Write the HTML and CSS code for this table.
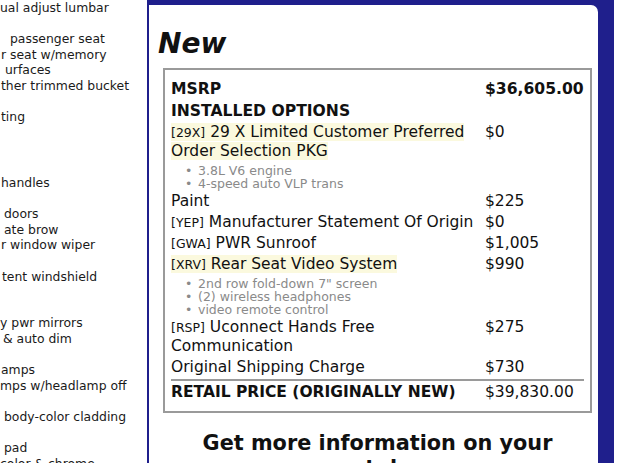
FILE: index.html
```html
<!DOCTYPE html>
<html>
<head>
<meta charset="utf-8">
<link rel="stylesheet" href="styles.css">
</head>
<body>
<div class="page">
  <div class="left">
    <div class="ln">ual adjust lumbar</div>
    <div class="ln gap"></div>
    <div class="ln x10">passenger seat</div>
    <div class="ln x1">r seat w/memory</div>
    <div class="ln x5">urfaces</div>
    <div class="ln x1">ther trimmed bucket</div>
    <div class="ln gap"></div>
    <div class="ln x1">ting</div>
    <div class="ln gap tall"></div>
    <div class="ln gap"></div>
    <div class="ln gap"></div>
    <div class="ln x1">handles</div>
    <div class="ln gap"></div>
    <div class="ln x4">doors</div>
    <div class="ln x4">ate brow</div>
    <div class="ln x1">r window wiper</div>
    <div class="ln gap"></div>
    <div class="ln x2">tent windshield</div>
    <div class="ln gap"></div>
    <div class="ln gap"></div>
    <div class="ln">y pwr mirrors</div>
    <div class="ln x3">&amp; auto dim</div>
    <div class="ln gap"></div>
    <div class="ln x1">amps</div>
    <div class="ln">mps w/headlamp off</div>
    <div class="ln gap"></div>
    <div class="ln x4">body-color cladding</div>
    <div class="ln gap"></div>
    <div class="ln x4">pad</div>
    <div class="ln">color &amp; chrome</div>
  </div>
  <div class="frame">
    <div class="panel">
      <h1 class="title">New</h1>
      <div class="box">
        <div class="row head">
          <div class="desc">MSRP</div>
          <div class="price">$36,605.00</div>
        </div>
        <div class="row head">
          <div class="desc">INSTALLED OPTIONS</div>
          <div class="price"></div>
        </div>
        <div class="row">
          <div class="desc"><span class="hl"><span class="code">[29X]</span> 29 X Limited Customer Preferred Order Selection PKG</span>
            <ul class="feats">
              <li>3.8L V6 engine</li>
              <li>4-speed auto VLP trans</li>
            </ul>
          </div>
          <div class="price">$0</div>
        </div>
        <div class="row">
          <div class="desc">Paint</div>
          <div class="price">$225</div>
        </div>
        <div class="row">
          <div class="desc"><span class="code">[YEP]</span> Manufacturer Statement Of Origin</div>
          <div class="price">$0</div>
        </div>
        <div class="row">
          <div class="desc"><span class="code">[GWA]</span> PWR Sunroof</div>
          <div class="price">$1,005</div>
        </div>
        <div class="row">
          <div class="desc"><span class="hl"><span class="code">[XRV]</span> Rear Seat Video System</span>
            <ul class="feats">
              <li>2nd row fold-down 7" screen</li>
              <li>(2) wireless headphones</li>
              <li>video remote control</li>
            </ul>
          </div>
          <div class="price">$990</div>
        </div>
        <div class="row">
          <div class="desc"><span class="code">[RSP]</span> Uconnect Hands Free Communication</div>
          <div class="price">$275</div>
        </div>
        <div class="row">
          <div class="desc">Original Shipping Charge</div>
          <div class="price">$730</div>
        </div>
        <div class="row total">
          <div class="desc">RETAIL PRICE (ORIGINALLY NEW)</div>
          <div class="price">$39,830.00</div>
        </div>
      </div>
      <h2 class="more">Get more information on your smartphone</h2>
    </div>
  </div>
  <div class="right"></div>
</div>
</body>
</html>
```

FILE: styles.css
```css
html, body {
  margin: 0;
  padding: 0;
  background: #ffffff;
}
body {
  width: 640px;
  height: 463px;
  overflow: hidden;
  font-family: "DejaVu Sans", Verdana, sans-serif;
  color: #111;
}
.page {
  display: flex;
  height: 463px;
}
.left {
  width: 147px;
  flex: none;
  overflow: hidden;
  font-size: 12.4px;
  line-height: 15.6px;
  color: #1a1a1a;
  white-space: nowrap;
}
.ln { height: 15.6px; }
.ln.tall { height: 19px; }
.x1 { padding-left: 1px; }
.x2 { padding-left: 2px; }
.x3 { padding-left: 3px; }
.x4 { padding-left: 4px; }
.x5 { padding-left: 5px; }
.x10 { padding-left: 10px; }

.frame {
  width: 449px;
  flex: none;
  background: #1f1f8c;
  padding: 5px 16px 0 2px;
}
.panel {
  background: #ffffff;
  border-radius: 0 7px 0 0;
  height: 100%;
  padding: 0 6px 0 14px;
  box-sizing: border-box;
  overflow: hidden;
}
.right {
  flex: 1;
  background: #ffffff;
}
.title {
  margin: 22px 0 8px -5px;
  font-size: 28px;
  font-weight: bold;
  font-style: italic;
  line-height: 33px;
  color: #111;
}
.box {
  border: 2px solid #9a9a9a;
  padding: 8px 6px 8px 6px;
}
.row {
  display: grid;
  grid-template-columns: 1fr 99px;
  column-gap: 8px;
  font-size: 15.5px;
  line-height: 19px;
  padding: 1px 0;
}
.row.head {
  font-weight: bold;
  font-size: 15.6px;
  line-height: 20px;
}
.code {
  font-size: 12.5px;
}
.hl {
  background: #fbf9de;
}
.feats {
  list-style: none;
  margin: 3px 0 0 0;
  padding: 0 0 0 14px;
  font-size: 12.5px;
  line-height: 13px;
  color: #8a8a8a;
}
.feats li::before {
  content: "•";
  display: inline-block;
  width: 13px;
}
.row.total {
  font-weight: bold;
  border-top: 2px solid #9a9a9a;
  margin-top: 1px;
  padding-top: 2px;
}
.row.total .price { font-weight: normal; }
.more {
  margin: 18px 0 0 0;
  text-align: center;
  font-size: 20.8px;
  line-height: 25px;
  font-weight: bold;
  color: #111;
}
```
